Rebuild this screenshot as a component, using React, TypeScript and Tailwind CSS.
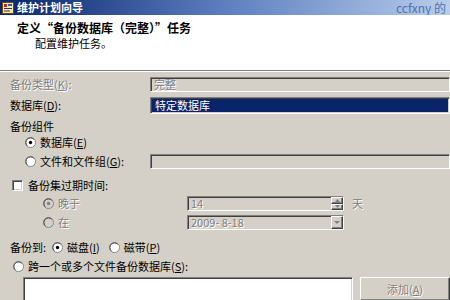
import React from "react";

const FONT = '"Noto Sans CJK SC", "Noto Sans", sans-serif';

// sunken 3D edge used by classic Windows edit boxes
const sunken =
  "border-t border-l border-t-[#808080] border-l-[#808080] border-b border-r border-b-white border-r-white shadow-[inset_1px_1px_0_#404040,inset_-1px_-1px_0_#d4d0c8]";

const raised =
  "border-t border-l border-t-white border-l-white border-b border-r border-b-[#404040] border-r-[#404040] shadow-[inset_-1px_-1px_0_#808080]";

const disabledText = "text-[#808080] [text-shadow:1px_1px_0_#ffffff]";

function Radio({ checked, disabled }: { checked?: boolean; disabled?: boolean }) {
  return (
    <svg width="11" height="11" viewBox="0 0 12 12" className="shrink-0">
      <circle cx="6" cy="6" r="5.5" fill={disabled ? "#d4d0c8" : "#ffffff"} stroke="#808080" />
      <path d="M2.5 9.5 A4.5 4.5 0 0 1 9.5 2.5" fill="none" stroke="#404040" />
      {checked && <circle cx="6" cy="6" r="1.8" fill={disabled ? "#808080" : "#000000"} />}
    </svg>
  );
}

function Checkbox() {
  return <div className={`w-[11px] h-[11px] bg-white shrink-0 ${sunken}`} />;
}

function Label({ children, disabled }: { children: React.ReactNode; disabled?: boolean }) {
  return (
    <span className={`whitespace-nowrap leading-none ${disabled ? disabledText : "text-black"}`}>
      {children}
    </span>
  );
}

function TitleIcon() {
  return (
    <svg width="12" height="12" viewBox="0 0 12 12" className="shrink-0">
      <rect x="0.5" y="0.5" width="11" height="11" fill="#f3e7b0" stroke="#6b4a1a" />
      <rect x="2" y="2" width="3" height="3" fill="#c8281e" />
      <rect x="6" y="2" width="4" height="2" fill="#2a5bb8" />
      <rect x="2" y="6" width="8" height="1" fill="#3a3a3a" />
      <rect x="2" y="8.5" width="6" height="1" fill="#3a3a3a" />
    </svg>
  );
}

function Field({ className, children }: { className: string; children?: React.ReactNode }) {
  return (
    <div className={`h-[15px] flex items-center px-[3px] leading-none ${sunken} ${className}`}>
      {children}
    </div>
  );
}

export default function App() {
  return (
    <div
      className="w-[450px] h-[300px] overflow-hidden bg-[#d4d0c8] text-[11px] flex flex-col"
      style={{ fontFamily: FONT }}
    >
      {/* title bar */}
      <div className="h-[15px] shrink-0 flex items-center bg-gradient-to-r from-[#0a246a] via-[#5d7fbf] to-[#b9cdea] pl-[2px] gap-[3px]">
        <TitleIcon />
        <span className="text-white font-bold text-[11px] leading-none">维护计划向导</span>
        <span className="ml-auto text-[12px] leading-none text-[#4d72b6] pr-[4px] whitespace-nowrap">
          ccfxny 的
        </span>
      </div>

      {/* header */}
      <div className="h-[55px] shrink-0 bg-white pl-[17px] pt-[7px] flex flex-col">
        <span className="font-bold text-[12px] leading-none text-black whitespace-nowrap">
          定义“备份数据库（完整）”任务
        </span>
        <span className="pl-[18px] pt-[4px] text-[11px] leading-none text-black">配置维护任务。</span>
      </div>
      <div className="h-px shrink-0 bg-[#808080]" />
      <div className="h-px shrink-0 bg-white" />

      {/* body */}
      <div className="flex flex-col">
        <div className="flex items-center h-[15px] mt-[5px] pl-[10px]">
          <div className="w-[140px]">
            <Label disabled>
              备份类型(<u>K</u>):
            </Label>
          </div>
          <Field className="flex-1 bg-[#d4d0c8]">
            <span className={disabledText}>完整</span>
          </Field>
        </div>

        <div className="flex items-center h-[17px] mt-[5px] pl-[10px]">
          <div className="w-[140px]">
            <Label>
              数据库(<u>D</u>):
            </Label>
          </div>
          <div className={`h-[17px] flex-1 flex items-center bg-[#0a246a] pl-[4px] text-white leading-none ${sunken}`}>
            特定数据库
          </div>
        </div>

        <div className="flex items-center h-[14px] mt-[5px] pl-[10px]">
          <Label>备份组件</Label>
        </div>

        <div className="flex items-center h-[14px] mt-[2px] pl-[25px] gap-[4px]">
          <Radio checked />
          <Label>
            数据库(<u>E</u>)
          </Label>
        </div>

        <div className="flex items-center h-[15px] mt-[5px] pl-[25px]">
          <div className="w-[125px] flex items-center gap-[4px]">
            <Radio />
            <Label>
              文件和文件组(<u>G</u>):
            </Label>
          </div>
          <Field className="flex-1 bg-[#d4d0c8]" />
        </div>

        <div className="flex items-center h-[14px] mt-[9px] pl-[12px] gap-[5px]">
          <Checkbox />
          <Label>备份集过期时间:</Label>
        </div>

        <div className="flex items-center h-[15px] mt-[4px] pl-[43px]">
          <div className="w-[144px] flex items-center gap-[4px]">
            <Radio checked disabled />
            <Label disabled>晚于</Label>
          </div>
          <Field className="w-[157px] bg-[#d4d0c8] pr-0">
            <span className={`flex-1 ${disabledText}`}>14</span>
            <div className="flex flex-col w-[12px] h-full">
              <div className={`flex-1 bg-[#d4d0c8] flex items-center justify-center ${raised}`}>
                <svg width="5" height="3" viewBox="0 0 5 3">
                  <path d="M2.5 0 L5 3 L0 3 Z" fill="#808080" />
                </svg>
              </div>
              <div className={`flex-1 bg-[#d4d0c8] flex items-center justify-center ${raised}`}>
                <svg width="5" height="3" viewBox="0 0 5 3">
                  <path d="M0 0 L5 0 L2.5 3 Z" fill="#808080" />
                </svg>
              </div>
            </div>
          </Field>
          <span className={`ml-[8px] ${disabledText} leading-none`}>天</span>
        </div>

        <div className="flex items-center h-[15px] mt-[4px] pl-[43px]">
          <div className="w-[144px] flex items-center gap-[4px]">
            <Radio disabled />
            <Label disabled>在</Label>
          </div>
          <Field className="w-[157px] bg-[#d4d0c8] pr-0">
            <span className={`flex-1 ${disabledText}`}>2009- 8-18</span>
            <div className={`w-[12px] h-full bg-[#d4d0c8] flex items-center justify-center ${raised}`}>
              <svg width="6" height="3" viewBox="0 0 6 3">
                <path d="M0 0 L6 0 L3 3 Z" fill="#808080" />
              </svg>
            </div>
          </Field>
        </div>

        <div className="flex items-center h-[14px] mt-[10px] pl-[10px]">
          <Label>备份到:</Label>
          <div className="ml-[6px] flex items-center gap-[4px]">
            <Radio checked />
            <Label>
              磁盘(<u>I</u>)
            </Label>
          </div>
          <div className="ml-[9px] flex items-center gap-[4px]">
            <Radio />
            <Label>
              磁带(<u>P</u>)
            </Label>
          </div>
        </div>

        <div className="flex items-center h-[14px] mt-[5px] pl-[13px] gap-[4px]">
          <Radio />
          <Label>
            跨一个或多个文件备份数据库(<u>S</u>):
          </Label>
        </div>

        <div className="flex mt-[4px] pl-[23px]">
          <div className={`w-[350px] h-[40px] bg-white ${sunken}`} />
          <div
            className={`ml-[7px] w-[90px] h-[24px] shrink-0 bg-[#d4d0c8] flex items-center justify-center ${raised}`}
          >
            <span className={`${disabledText} leading-none`}>
              添加(<u>A</u>)
            </span>
          </div>
        </div>
      </div>
    </div>
  );
}
